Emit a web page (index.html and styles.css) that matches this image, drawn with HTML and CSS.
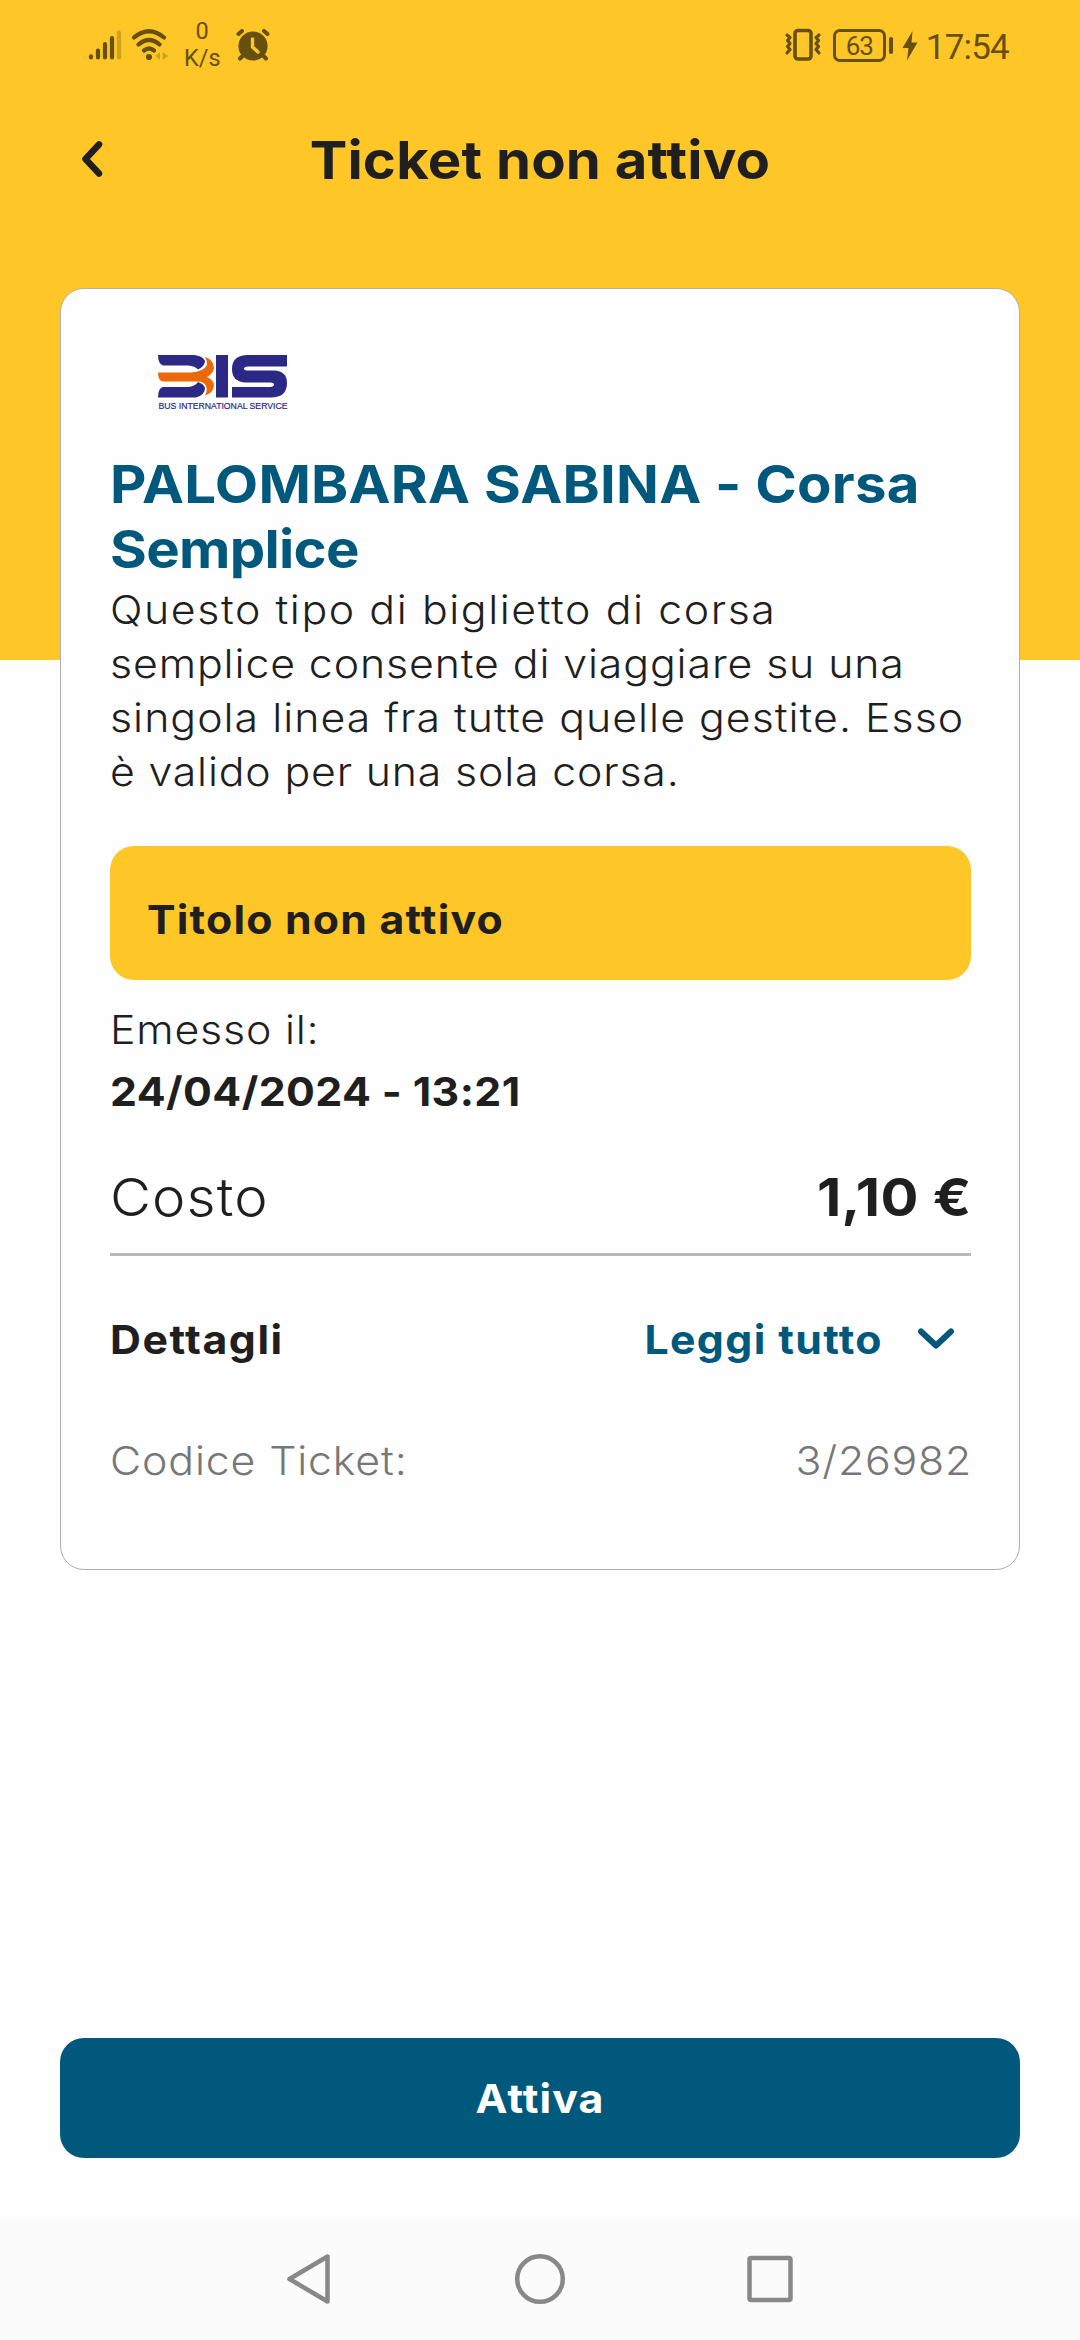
FILE: index.html
```html
<!DOCTYPE html>
<html lang="it">
<head>
<meta charset="utf-8">
<title>Ticket non attivo</title>
<link rel="stylesheet" href="styles.css">
</head>
<body>
<div class="screen">
  <div class="status">
    <div class="status-side">
      <svg class="signal" width="34" height="32" viewBox="0 0 34 32" fill="none" stroke="#66500f" stroke-width="4.2" stroke-linecap="round"><path d="M3 27.400V28.500M10 21.500V28.500M17 15V28.500M24 9V28.500"/><path stroke="#cfa11f" d="M31 3.500V28.500"/></svg>
      <svg class="wifi" width="40" height="34" viewBox="0 0 40 34" fill="none" stroke="#66500f" stroke-width="4.200" stroke-linecap="round"><path d="M4 9.500Q19 -3 34 9.500M8.500 16.500Q19 7.500 29.500 16.500M14 22.500Q19 18.500 24 22.500"/><circle cx="19" cy="29" r="3.100" fill="#66500f" stroke="none"/><path fill="#cfa11f" stroke="none" d="M30 24V32L25.500 28zM32.500 24V32L38.500 28z"/></svg>
      <div class="speed"><span>0</span><span>K/s</span></div>
      <svg class="alarm" width="34" height="32" viewBox="0 0 34 32"><circle cx="17" cy="17" r="14.600" fill="#66500f"/><path d="M2.500 5L6 2M31.500 5L28 2M6.500 27L4 29.500M27.500 27L30 29.500" stroke="#66500f" stroke-width="4" stroke-linecap="round"/><path d="M16.500 10V18L22 23" fill="none" stroke="#ffc628" stroke-width="3.400" stroke-linecap="round" stroke-linejoin="round"/></svg>
    </div>
    <div class="status-side">
      <svg class="vibrate" width="38" height="34" viewBox="0 0 38 34" fill="none" stroke="#66500f"><rect x="11" y="2.500" width="16" height="28.500" rx="3" stroke-width="3.600"/><path stroke-width="3.200" stroke-linejoin="round" stroke-linecap="round" d="M3 7L6 9.500L3.500 12.500L6 15.500L3.500 18.500L6 21.500L3 25M35 7L32 9.500L34.500 12.500L32 15.500L34.500 18.500L32 21.500L35 25"/></svg>
      <div class="battery">63</div>
      <div class="battery-tip"></div>
      <svg class="bolt" width="16" height="30" viewBox="0 0 16 30"><path fill="#66500f" d="M10.500 0L0.500 17H6.500L5 29.500L15.500 11.500H9.500z"/></svg>
      <div class="clock">17:54</div>
    </div>
  </div>

  <header class="header">
    <svg class="back" width="28" height="56" viewBox="0 0 28 56"><path d="M21 5.500L7.500 20L21 34.500" transform="translate(0 7)" fill="none" stroke="#1f1f1f" stroke-width="6.500" stroke-linecap="round" stroke-linejoin="round"/></svg>
    <h1 class="title wide">Ticket non attivo</h1>
  </header>

  <main class="card">
    <svg class="logo" width="132" height="60" viewBox="0 0 132 60">
      <g fill="#2c2885">
        <path d="M0 1H36Q45 2 47 7Q47 12 40 15.500Q37 12 30 11.500H5Q0 10 0 1z"/>
        <path d="M0 43.500H38Q47 41 47 34Q46 30 40 28Q37 32.500 30 33H5Q0 34 0 43.500z"/>
        <path d="M58 1H70V43.500H58z"/>
        <path d="M129 1V12.500H90Q86 13 86 14.500Q86 16.500 90 16.500H116Q129 17 129 29Q129 43.500 113 43.500H74V33H112Q116 32.500 116 30.500Q116 28.500 112 28.500H88Q74 28 74 15Q74 1 90 1z"/>
      </g>
      <path fill="#eb6909" d="M0 18.500H34Q46 17 49 11Q49 6 47 3Q56 6 56 14Q55 20 49 23Q56 26 56 32Q55 39 47 41.500Q50 36 48 32Q46 27 38 27.500H5Q0 27 0 18.500z"/>
      <text x="0.500" y="55" class="logo-text" textLength="129" lengthAdjust="spacingAndGlyphs">BUS INTERNATIONAL SERVICE</text>
    </svg>
    <h2 class="product"><span class="p1 wide left">PALOMBARA SABINA - Corsa</span> <span class="p2 wide left">Semplice</span></h2>
    <p class="desc"><span class="d1 wide left">Questo tipo di biglietto di corsa</span> <span class="d2 wide left">semplice consente di viaggiare su una</span> <span class="d3 wide left">singola linea fra tutte quelle gestite. Esso</span> <span class="d4 wide left">è valido per una sola corsa.</span></p>
    <div class="state"><span class="wide left">Titolo non attivo</span></div>
    <div class="issued"><div class="issued-label wide left">Emesso il:</div><div class="issued-date wide left">24/04/2024 - 13:21</div></div>
    <div class="row cost"><span class="cost-label wide left">Costo</span><span class="price wide right">1,10 €</span></div>
    <div class="row details"><span class="details-label wide left">Dettagli</span><a class="more"><span class="wide right">Leggi tutto</span><svg class="chevron" width="38" height="24" viewBox="0 0 38 24"><path d="M4 4.500L19 18.500L34 4.500" fill="none" stroke="#00587c" stroke-width="6" stroke-linecap="round" stroke-linejoin="round"/></svg></a></div>
    <div class="row code"><span class="code-label wide left">Codice Ticket:</span><span class="code-value wide right">3/26982</span></div>
  </main>

  <button class="activate"><span class="wide">Attiva</span></button>

  <nav class="nav">
    <svg width="48" height="54" viewBox="0 0 48 54"><path d="M43.500 4.500V49.500L5.500 27z"/></svg>
    <svg width="54" height="54" viewBox="0 0 54 54"><circle cx="28" cy="27" r="22.800"/></svg>
    <svg width="50" height="54" viewBox="0 0 50 54"><rect x="3.500" y="6" width="41" height="42" rx="1.500"/></svg>
  </nav>
</div>
</body>
</html>
```
FILE: styles.css
```css
* { box-sizing: border-box; }
body { margin: 0; font-family: Inter, "Liberation Sans", sans-serif; color: #1f1f1f; }
h1, h2, p { margin: 0; }
svg { display: block; flex: none; }

/* Slightly extended letterforms */
.wide { display: block; transform: scaleX(1.07); transform-origin: center; white-space: nowrap; }
.left { transform-origin: left; }
.right { transform-origin: right; }

.screen {
  width: 1080px; height: 2340px; display: flex; flex-direction: column;
  background: linear-gradient(#ffc628 660px, #fefefe 660px);
}

.status { height: 90px; padding: 0 71px 0 86px; display: flex; justify-content: space-between; color: #66500f; }
.status-side { display: flex; align-items: flex-start; font-family: Roboto, sans-serif; }
.signal { margin-top: 29px; margin-left: 2px; }
.wifi { margin-top: 28px; margin-left: 8px; }
.speed { margin: 18px 0 0 14px; width: 36px; display: flex; flex-direction: column; text-align: center; font-size: 23.500px; line-height: 27px; }
.alarm { margin-top: 29px; margin-left: 16px; }
.vibrate { margin-top: 28px; }
.battery {
  margin: 29px 0 0 11px; width: 53px; height: 33px; border: 3px solid #66500f; border-radius: 7px;
  text-align: center; font-size: 26px; line-height: 28px; letter-spacing: -1px;
}
.battery-tip { margin: 37px 0 0 3px; width: 4px; height: 17px; border-radius: 2px; background: #66500f; }
.bolt { margin: 31px 0 0 9px; }
.clock { margin: 27px 0 0 8px; font-size: 35px; line-height: 41px; letter-spacing: -0.800px; }

.header { height: 140px; padding: 0 78px; display: grid; grid-template-columns: 40px 1fr 40px; align-items: center; }
.title { text-align: center; font-size: 52.600px; font-weight: 700; line-height: 70px; letter-spacing: 0.200px; }

.card {
  margin: 58px 60px 0; height: 1282px; padding: 65px 48px 0 49px;
  background: #fefefe; border: 1px solid #b0b0b0; border-radius: 24px; display: flex; flex-direction: column;
}
.logo { margin-left: 48px; margin-bottom: 38px; }
.logo-text { font: 9.500px "Liberation Sans", Arial, sans-serif; fill: #2c2885; stroke: #2c2885; stroke-width: 0.200px; }

.product { color: #00587c; font-size: 52.600px; font-weight: 700; line-height: 65px; }
.p1 { letter-spacing: 0.240px; }
.p2 { letter-spacing: -0.640px; }
.desc { margin-top: 1px; font-size: 40px; font-weight: 300; line-height: 54px; }
.d1 { letter-spacing: 1.480px; }
.d2 { letter-spacing: 0.840px; }
.d3 { letter-spacing: 0.960px; }
.d4 { letter-spacing: 0.780px; }

.state {
  margin-top: 47px; height: 134px; padding: 13px 37px 0; display: flex; align-items: center;
  background: #ffc628; border-radius: 24px; font-size: 40px; font-weight: 700; letter-spacing: 1.110px;
}
.issued { margin-top: 19px; font-size: 40px; line-height: 62px; }
.issued-label { font-weight: 300; letter-spacing: 0.770px; }
.issued-date { font-weight: 700; letter-spacing: 0.370px; }

.row { display: flex; justify-content: space-between; line-height: 60px; font-size: 40px; }
.cost { margin-top: 44px; padding-bottom: 26px; height: 89px; border-bottom: 3px solid #b9b9b9; font-size: 52.600px; }
.cost-label { font-weight: 300; letter-spacing: 1.040px; }
.price { font-weight: 700; letter-spacing: 0.420px; margin-right: -1px; }
.details { margin-top: 54px; font-weight: 700; }
.details-label { letter-spacing: 1.410px; }
.more { display: flex; color: #00587c; letter-spacing: 1.280px; }
.chevron { margin: 17px 16px 0 34px; }
.code { margin-top: 61px; color: #777; font-weight: 300; }
.code-label { letter-spacing: 0.810px; }
.code-value { letter-spacing: 0.760px; margin-right: -1px; }

.activate {
  margin: auto 60px 60px; height: 120px; flex: none; border: 0; padding: 0; border-radius: 24px;
  background: #00587c; color: #fff; font: 700 40px Inter, sans-serif; letter-spacing: 1.040px;
}
.nav { height: 122px; flex: none; padding: 0 284px; display: flex; justify-content: space-between; align-items: center; background: #fbfbfb; }
.nav svg { fill: none; stroke: #888; stroke-width: 4.500px; stroke-linejoin: round; }
```
